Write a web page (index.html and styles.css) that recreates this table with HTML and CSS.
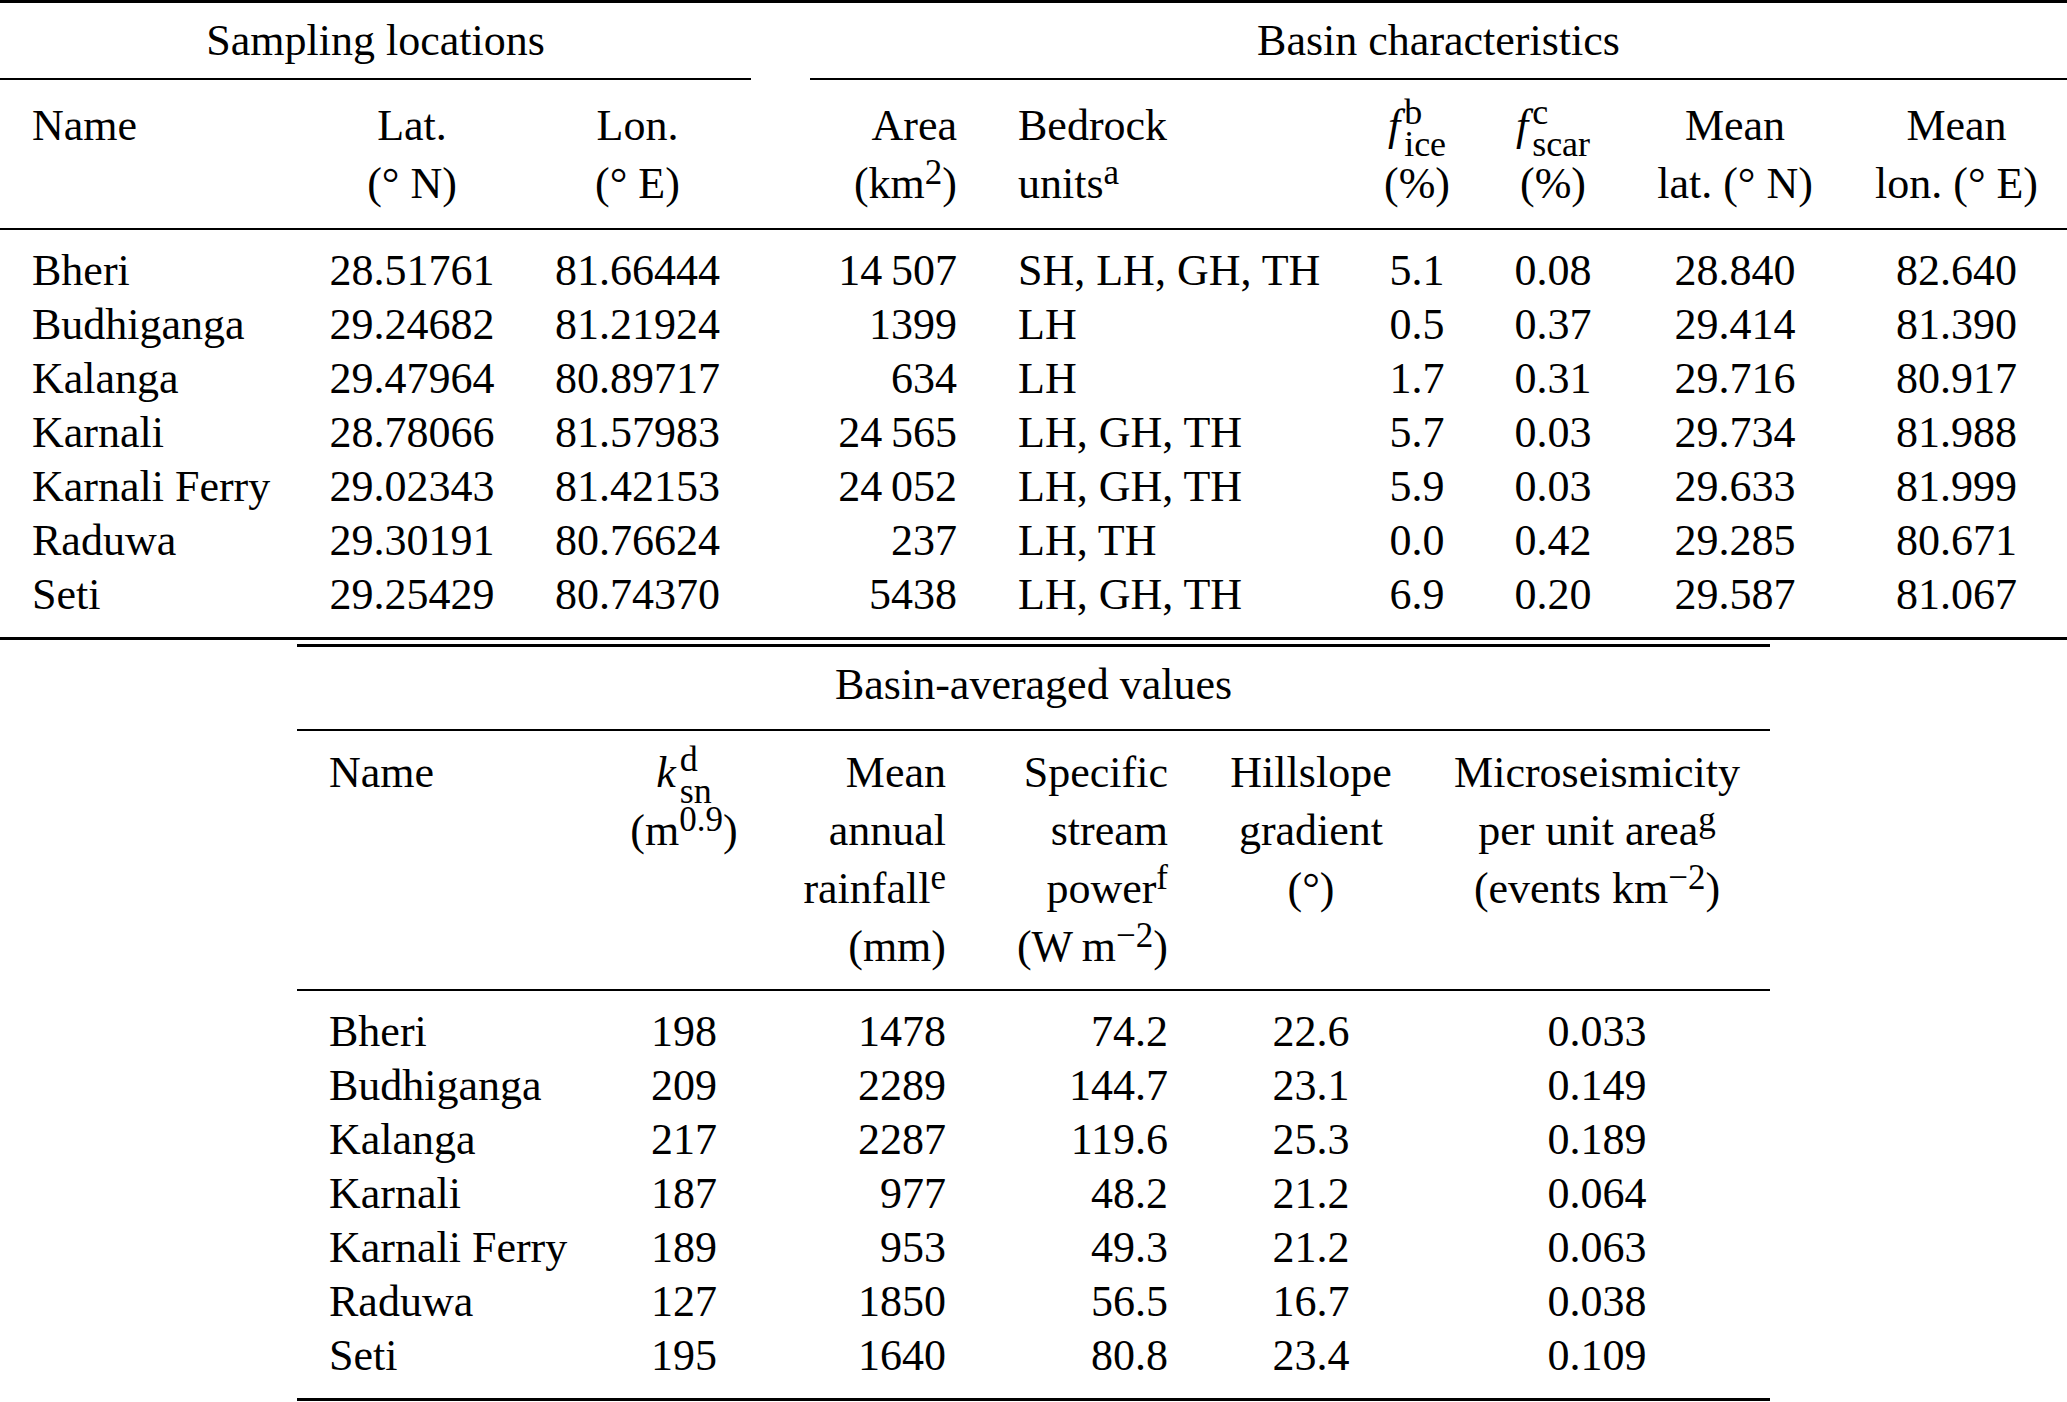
FILE: index.html
```html
<!DOCTYPE html>
<html lang="en">
<head>
<meta charset="utf-8">
<title>Sampling locations and basin characteristics</title>
<link rel="stylesheet" href="styles.css">
</head>
<body>
<table class="tbl tbl-main">
  <colgroup>
    <col style="width:300px"><col style="width:224px"><col style="width:227px"><col style="width:59px"><col style="width:177px"><col style="width:365px"><col style="width:130px"><col style="width:142px"><col style="width:222px"><col style="width:221px">
  </colgroup>
  <thead>
    <tr class="group">
      <th colspan="3" class="ruled">Sampling locations</th>
      <th></th>
      <th colspan="6" class="ruled">Basin characteristics</th>
    </tr>
    <tr class="head">
      <th class="c-name">Name</th>
      <th class="c-center">Lat.<br>(° N)</th>
      <th class="c-center">Lon.<br>(° E)</th>
      <th></th>
      <th class="c-right">Area<br>(km<sup>2</sup>)</th>
      <th class="c-rock">Bedrock<br>units<sup>a</sup></th>
      <th class="c-center"><i>f</i><span class="ss"><span>b</span><span>ice</span></span><br>(%)</th>
      <th class="c-center"><i>f</i><span class="ss"><span>c</span><span>scar</span></span><br>(%)</th>
      <th class="c-center">Mean<br>lat. (° N)</th>
      <th class="c-center">Mean<br>lon. (° E)</th>
    </tr>
  </thead>
  <tbody>
    <tr><td class="c-name">Bheri</td><td class="c-center">28.51761</td><td class="c-center">81.66444</td><td></td><td class="c-right">14&#8201;507</td><td class="c-rock">SH, LH, GH, TH</td><td class="c-center">5.1</td><td class="c-center">0.08</td><td class="c-center">28.840</td><td class="c-center">82.640</td></tr>
    <tr><td class="c-name">Budhiganga</td><td class="c-center">29.24682</td><td class="c-center">81.21924</td><td></td><td class="c-right">1399</td><td class="c-rock">LH</td><td class="c-center">0.5</td><td class="c-center">0.37</td><td class="c-center">29.414</td><td class="c-center">81.390</td></tr>
    <tr><td class="c-name">Kalanga</td><td class="c-center">29.47964</td><td class="c-center">80.89717</td><td></td><td class="c-right">634</td><td class="c-rock">LH</td><td class="c-center">1.7</td><td class="c-center">0.31</td><td class="c-center">29.716</td><td class="c-center">80.917</td></tr>
    <tr><td class="c-name">Karnali</td><td class="c-center">28.78066</td><td class="c-center">81.57983</td><td></td><td class="c-right">24&#8201;565</td><td class="c-rock">LH, GH, TH</td><td class="c-center">5.7</td><td class="c-center">0.03</td><td class="c-center">29.734</td><td class="c-center">81.988</td></tr>
    <tr><td class="c-name">Karnali Ferry</td><td class="c-center">29.02343</td><td class="c-center">81.42153</td><td></td><td class="c-right">24&#8201;052</td><td class="c-rock">LH, GH, TH</td><td class="c-center">5.9</td><td class="c-center">0.03</td><td class="c-center">29.633</td><td class="c-center">81.999</td></tr>
    <tr><td class="c-name">Raduwa</td><td class="c-center">29.30191</td><td class="c-center">80.76624</td><td></td><td class="c-right">237</td><td class="c-rock">LH, TH</td><td class="c-center">0.0</td><td class="c-center">0.42</td><td class="c-center">29.285</td><td class="c-center">80.671</td></tr>
    <tr><td class="c-name">Seti</td><td class="c-center">29.25429</td><td class="c-center">80.74370</td><td></td><td class="c-right">5438</td><td class="c-rock">LH, GH, TH</td><td class="c-center">6.9</td><td class="c-center">0.20</td><td class="c-center">29.587</td><td class="c-center">81.067</td></tr>
  </tbody>
</table>

<table class="tbl tbl-avg">
  <colgroup>
    <col style="width:299px"><col style="width:176px"><col style="width:204px"><col style="width:222px"><col style="width:226px"><col style="width:346px">
  </colgroup>
  <thead>
    <tr class="group">
      <th colspan="6" class="ruled">Basin-averaged values</th>
    </tr>
    <tr class="head">
      <th class="c-name">Name</th>
      <th class="c-center"><i>k</i><span class="ss"><span>d</span><span>sn</span></span><br>(m<sup>0.9</sup>)</th>
      <th class="c-right">Mean<br>annual<br>rainfall<sup>e</sup><br>(mm)</th>
      <th class="c-right">Specific<br>stream<br>power<sup>f</sup><br>(W&#8201;m<sup>&minus;2</sup>)</th>
      <th class="c-center">Hillslope<br>gradient<br>(°)</th>
      <th class="c-center">Microseismicity<br>per unit area<sup>g</sup><br>(events km<sup>&minus;2</sup>)</th>
    </tr>
  </thead>
  <tbody>
    <tr><td class="c-name">Bheri</td><td class="c-center">198</td><td class="c-right">1478</td><td class="c-right">74.2</td><td class="c-center">22.6</td><td class="c-center">0.033</td></tr>
    <tr><td class="c-name">Budhiganga</td><td class="c-center">209</td><td class="c-right">2289</td><td class="c-right">144.7</td><td class="c-center">23.1</td><td class="c-center">0.149</td></tr>
    <tr><td class="c-name">Kalanga</td><td class="c-center">217</td><td class="c-right">2287</td><td class="c-right">119.6</td><td class="c-center">25.3</td><td class="c-center">0.189</td></tr>
    <tr><td class="c-name">Karnali</td><td class="c-center">187</td><td class="c-right">977</td><td class="c-right">48.2</td><td class="c-center">21.2</td><td class="c-center">0.064</td></tr>
    <tr><td class="c-name">Karnali Ferry</td><td class="c-center">189</td><td class="c-right">953</td><td class="c-right">49.3</td><td class="c-center">21.2</td><td class="c-center">0.063</td></tr>
    <tr><td class="c-name">Raduwa</td><td class="c-center">127</td><td class="c-right">1850</td><td class="c-right">56.5</td><td class="c-center">16.7</td><td class="c-center">0.038</td></tr>
    <tr><td class="c-name">Seti</td><td class="c-center">195</td><td class="c-right">1640</td><td class="c-right">80.8</td><td class="c-center">23.4</td><td class="c-center">0.109</td></tr>
  </tbody>
</table>
</body>
</html>
```

FILE: styles.css
```css
html, body {
  margin: 0;
  padding: 0;
  background: #ffffff;
}

body {
  font-family: "Liberation Serif", "Times New Roman", serif;
  font-size: 44px;
  color: #000000;
  overflow: hidden;
}

.tbl {
  border-collapse: separate;
  border-spacing: 0;
  table-layout: fixed;
  border-top: 3px solid #000;
  border-bottom: 3px solid #000;
}

.tbl-main {
  width: 2067px;
}

.tbl-avg {
  width: 1473px;
  margin: 4px 0 0 297px;
}

th, td {
  padding: 0;
  font-weight: normal;
  white-space: nowrap;
  vertical-align: top;
}

/* group header rows */
.group th {
  line-height: 54px;
  text-align: center;
}

.group .ruled {
  border-bottom: 2px solid #000;
}

.tbl-main .group th {
  padding-top: 11px;
  padding-bottom: 10px;
}

.tbl-avg .group th {
  padding-top: 11px;
  padding-bottom: 17px;
}

/* column header rows */
.head th {
  border-bottom: 2px solid #000;
}

.tbl-main .head th {
  line-height: 58px;
  padding-top: 17px;
  padding-bottom: 15px;
}

.tbl-avg .head th {
  line-height: 58px;
  padding-top: 13px;
  padding-bottom: 13px;
}

/* data rows */
td {
  line-height: 54px;
}

.tbl-main tbody tr:first-child td {
  padding-top: 14px;
}

.tbl-main tbody tr:last-child td {
  padding-bottom: 15px;
}

.tbl-avg tbody tr:first-child td {
  padding-top: 14px;
}

.tbl-avg tbody tr:last-child td {
  padding-bottom: 15px;
}

/* alignment */
.c-name {
  text-align: left;
  padding-left: 32px;
}

.c-center {
  text-align: center;
}

.c-right {
  text-align: right;
  padding-right: 30px;
}

.c-rock {
  text-align: left;
  padding-left: 31px;
}

/* scripts */
sup {
  font-size: 35px;
  line-height: 0;
  vertical-align: 14px;
}

.ss {
  display: inline-block;
  vertical-align: -16px;
  font-size: 36px;
  line-height: 32px;
  margin-left: 4px;
  margin-top: -6px;
  margin-bottom: -10px;
  text-align: left;
}

.ss > span {
  display: block;
}
```
